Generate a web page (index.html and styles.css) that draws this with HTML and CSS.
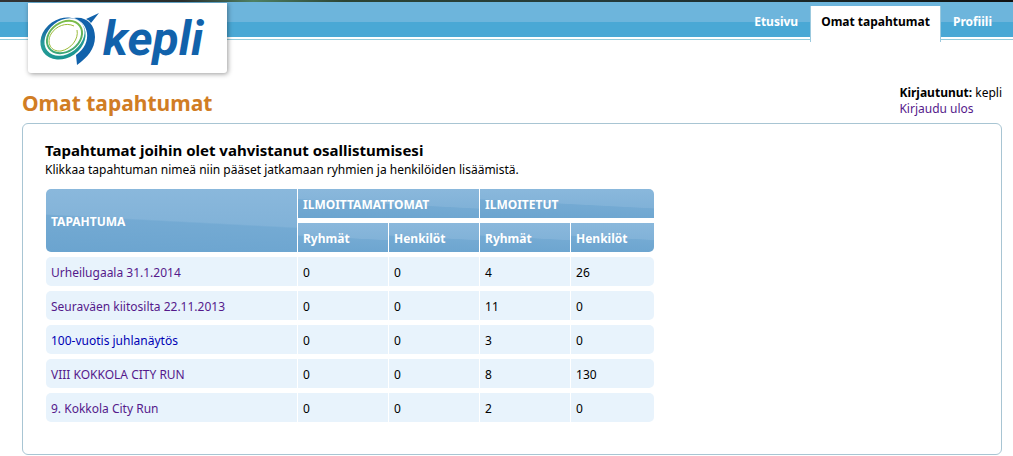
FILE: index.html
```html
<!DOCTYPE html>
<html lang="fi">
<head>
<meta charset="utf-8">
<title>Omat tapahtumat</title>
<link rel="stylesheet" href="styles.css">
</head>
<body>
<header class="header">
  <a class="logo" href="#" aria-label="kepli">
    <svg class="logo-art" viewBox="0 0 199 70" aria-hidden="true">
      <defs>
        <linearGradient id="ring" x1="0.2" y1="1" x2="0.7" y2="0">
          <stop offset="0" stop-color="#16948f"/>
          <stop offset="0.5" stop-color="#2a9c98"/>
          <stop offset="0.8" stop-color="#186ba6"/>
          <stop offset="1" stop-color="#1162ab"/>
        </linearGradient>
        <linearGradient id="rim" x1="0" y1="1" x2="1" y2="0">
          <stop offset="0" stop-color="#2aa184"/>
          <stop offset="1" stop-color="#8cc23c"/>
        </linearGradient>
      </defs>
      <ellipse cx="35" cy="35.500" rx="24" ry="19.500" transform="rotate(-35 35 35.500)" fill="url(#ring)"/>
      <ellipse cx="36.500" cy="34" rx="22" ry="16.500" transform="rotate(-38 36.500 34)" fill="#fff"/>
      <path d="M46 15C58 13 67 21 67 34C67 46 59 55 49 62L48 52C57 46 60 37 59 30C58 23 54 18 46 15Z" fill="#1162ab"/>
      <path d="M58 16L71 10L63 20Q61 17 58 16Z" fill="#1162ab"/>
      <ellipse cx="36.500" cy="34" rx="20" ry="15.500" transform="rotate(-36 36.500 34)" fill="url(#rim)"/>
      <ellipse cx="36.500" cy="34" rx="18" ry="13.500" transform="rotate(-36 36.500 34)" fill="#fff"/>
      <path d="M49 27C51 36 43 46 33 48C23 49 18 40 23 31C28 23 38 19 46 23" fill="none" stroke="#9bbb38" stroke-width="1"/>
      <text class="logo-text" x="75" y="52">kepli</text>
    </svg>
  </a>
  <nav class="nav">
    <a class="tab" href="#">Etusivu</a>
    <a class="tab tab-active" href="#" aria-current="page">Omat tapahtumat</a>
    <a class="tab" href="#">Profiili</a>
  </nav>
</header>
<main class="page">
  <div class="page-head">
    <h1 class="page-title">Omat tapahtumat</h1>
    <div class="session"><b>Kirjautunut:</b> kepli<br><a class="visited" href="#">Kirjaudu ulos</a></div>
  </div>
  <section class="panel">
    <h2 class="panel-title">Tapahtumat joihin olet vahvistanut osallistumisesi</h2>
    <p class="lead">Klikkaa tapahtuman nimeä niin pääset jatkamaan ryhmien ja henkilöiden lisäämistä.</p>
    <table class="events">
      <colgroup><col class="col-name"><col class="col-num"><col class="col-num"><col class="col-num"><col class="col-last"></colgroup>
      <thead>
        <tr><th class="upper corner-left" rowspan="2">Tapahtuma</th><th class="upper" colspan="2">Ilmoittamattomat</th><th class="upper corner-top" colspan="2">Ilmoitetut</th></tr>
        <tr><th>Ryhmät</th><th>Henkilöt</th><th>Ryhmät</th><th class="corner-bottom">Henkilöt</th></tr>
      </thead>
      <tbody>
        <tr><td><a class="visited" href="#">Urheilugaala 31.1.2014</a></td><td>0</td><td>0</td><td>4</td><td>26</td></tr>
        <tr><td><a class="visited" href="#">Seuraväen kiitosilta 22.11.2013</a></td><td>0</td><td>0</td><td>11</td><td>0</td></tr>
        <tr><td><a class="unvisited" href="#">100-vuotis juhlanäytös</a></td><td>0</td><td>0</td><td>3</td><td>0</td></tr>
        <tr><td><a class="visited" href="#">VIII KOKKOLA CITY RUN</a></td><td>0</td><td>0</td><td>8</td><td>130</td></tr>
        <tr><td><a class="visited" href="#">9. Kokkola City Run</a></td><td>0</td><td>0</td><td>2</td><td>0</td></tr>
      </tbody>
    </table>
  </section>
</main>
</body>
</html>
```
FILE: styles.css
```css
* { box-sizing: border-box; }
body {
  margin: 0;
  background: #fff;
  color: #000;
  font: 12px/16px "Noto Sans", sans-serif;
}
a { text-decoration: none; }
h1, h2, p { margin: 0; }
.header {
  display: flex;
  justify-content: space-between;
  align-items: flex-start;
  height: 85px;
  padding: 3px 9px 0 28px;
  background:
    linear-gradient(90deg, #333 0%, #2c302e 18%, #4e8063 25%, #2c4434 34%, #243a3a 60%, #111 100%) 0 0 / 100% 2px no-repeat,
    linear-gradient(#6db5dc 0 22px, #4aa8d5 22px 37px, #fff 37px 39px, #93cbdc 39px 40px, #fff 40px);
}
.logo {
  display: block;
  width: 199px;
  height: 70px;
  background: #fff;
  border-radius: 0 0 3px 3px;
  box-shadow: 1px 1px 5px rgba(0, 0, 0, .4);
}
.logo-art { display: block; width: 100%; height: 100%; }
.logo-text {
  fill: #1162ab;
  font: italic 700 48px Roboto, sans-serif;
}
.nav { display: flex; padding-top: 3px; }
.tab {
  height: 36px;
  padding: 8px 12px 0;
  color: #fff;
  font-weight: bold;
}
.tab-active {
  padding: 8px 10px 0;
  border: solid #9bc9de;
  border-width: 0 1px;
  background: #fff;
  color: #000;
}
.page { padding: 0 11px 0 22px; }
.page-head {
  display: flex;
  justify-content: space-between;
  height: 38px;
}
.page-title {
  padding-top: 4px;
  color: #d17d24;
  font-size: 21px;
  line-height: 28px;
}
.session { line-height: 16px; }
.visited { color: #551a8b; }
.unvisited { color: #0000b4; }
.panel {
  padding: 16px 22px 27px;
  border: 1px solid #a8c5d3;
  border-radius: 6px;
}
.panel-title { font-size: 15px; line-height: 20px; }
.lead { line-height: 20px; }
.events {
  width: 610px;
  margin-top: 4px;
  table-layout: fixed;
  border-spacing: 1px 5px;
}
.col-name { width: 251px; }
.col-num { width: 90px; }
.events th, .events td {
  height: 29px;
  padding: 2px 5px 0;
  text-align: left;
}
.events th {
  color: #fff;
  background: linear-gradient(3deg, #6ba4cf, #74aad3 48%, transparent 50%), linear-gradient(#8ab8dc, #7baed5);
}
.events td { background: #e8f3fc; }
.events td:first-child { border-radius: 5px 0 0 5px; }
.events td:last-child { border-radius: 0 5px 5px 0; }
.upper { text-transform: uppercase; }
.events .corner-left { border-radius: 5px 0 0 5px; }
.events .corner-top { border-radius: 0 5px 0 0; }
.events .corner-bottom { border-radius: 0 0 5px 0; }
```
